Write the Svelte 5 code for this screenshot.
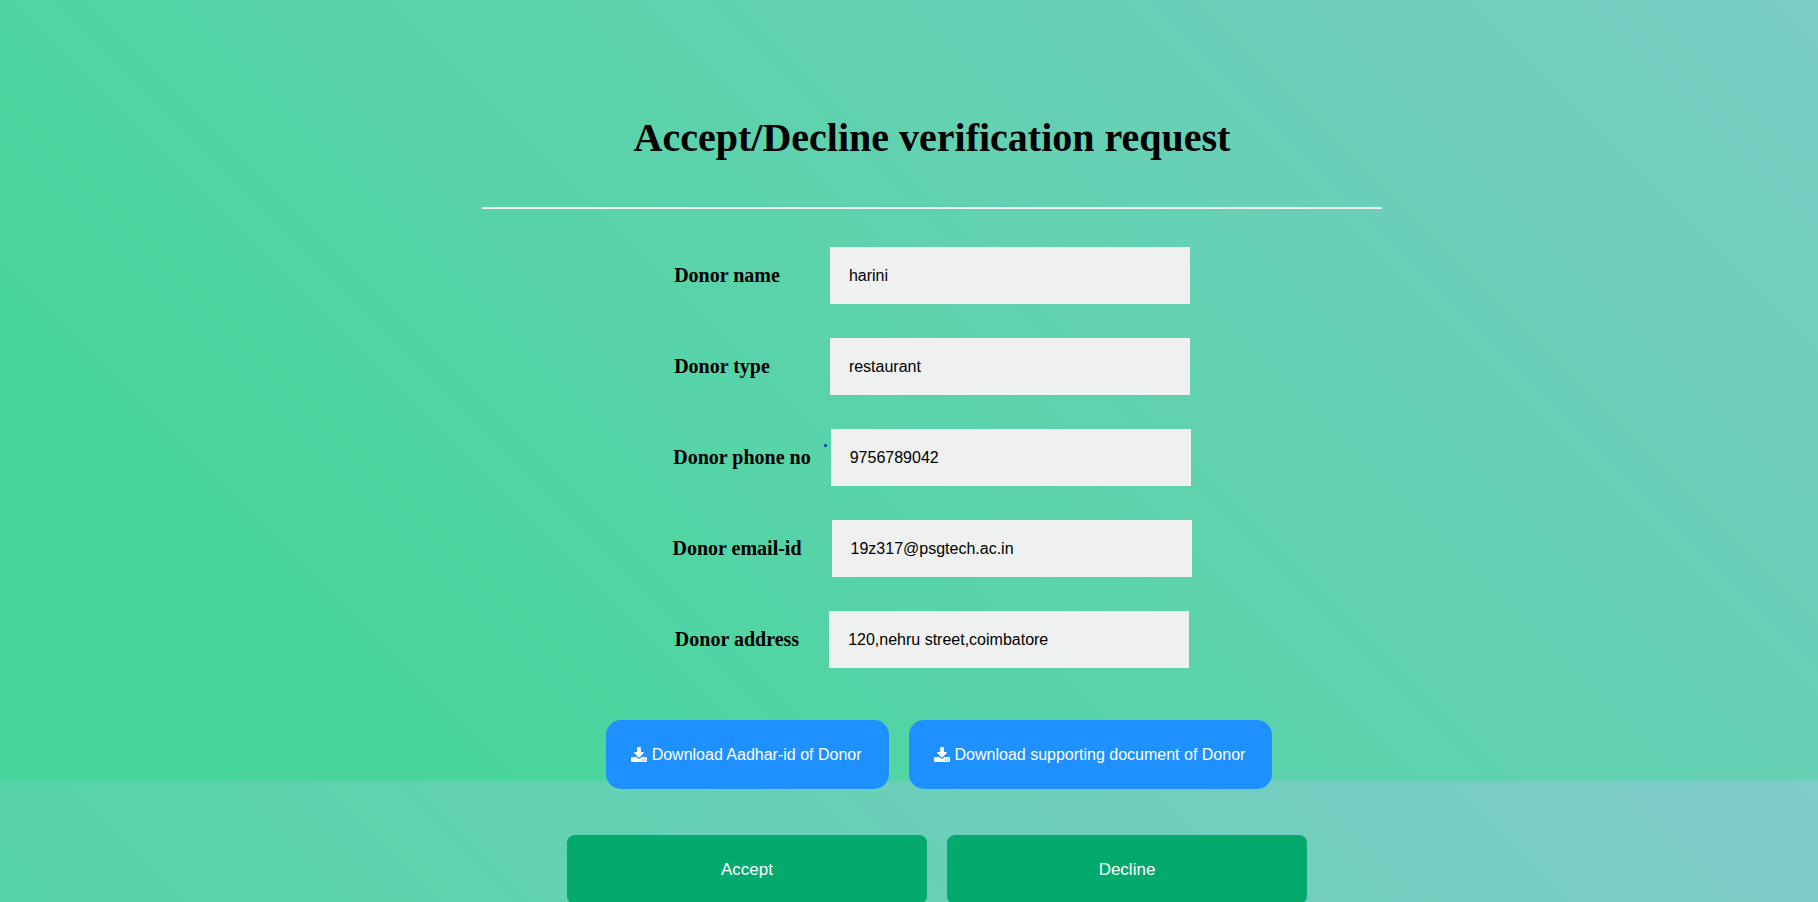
<script>
  const fields = [
    { id: 'name', label: 'Donor name', value: 'harini', type: 'text', gap: 50 },
    { id: 'type', label: 'Donor type', value: 'restaurant', type: 'text', gap: 60 },
    { id: 'phone', label: 'Donor phone no', value: '9756789042', type: 'text', gap: 20 },
    { id: 'email', label: 'Donor email-id', value: '19z317@psgtech.ac.in', type: 'text', gap: 30 },
    { id: 'address', label: 'Donor address', value: '120,nehru street,coimbatore', type: 'text', gap: 30 }
  ];
  const downloads = ['Download Aadhar-id of Donor', 'Download supporting document of Donor'];
</script>

<main class="page">
  <form class="request" onsubmit={(e) => e.preventDefault()}>
    <h1>Accept/Decline verification request</h1>
    <hr />
    {#each fields as field}
      <div class="field">
        <label for={field.id} style:margin-right="{field.gap}px">{field.label}</label>
        {#if field.id === 'phone'}<span class="dot"></span>{/if}
        <input id={field.id} type={field.type} value={field.value} />
      </div>
    {/each}
    <div class="row downloads">
      {#each downloads as text}
        <button type="button" class="download">
          <svg viewBox="0 0 1664 1536" aria-hidden="true">
            <path fill="currentColor" fill-rule="evenodd" d="M1280 1344q0-26-19-45t-45-19-45 19-19 45 19 45 45 19 45-19 19-45zM1536 1344q0-26-19-45t-45-19-45 19-19 45 19 45 45 19 45-19 19-45zM1664 1120v320q0 40-28 68t-68 28H96q-40 0-68-28t-28-68v-320q0-40 28-68t68-28h465l135 136q58 56 136 56t136-56l136-136h464q40 0 68 28t28 68zM1339 551q17 41-14 70l-448 448q-18 19-45 19t-45-19L339 621q-31-29-14-70 17-39 59-39h256V64q0-26 19-45t45-19h256q26 0 45 19t19 45v448h256q42 0 59 39z" />
          </svg>
          {text}
        </button>
      {/each}
    </div>
    <div class="row">
      <button type="submit" class="decide">Accept</button>
      <button type="button" class="decide">Decline</button>
    </div>
  </form>
</main>

<style>
  :global(html) {
    min-height: 100%;
    scrollbar-width: none;
    background: linear-gradient(45deg, #49d69d 0%, #49d69d 17%, #81cbca 100%) 0 -320px / 100% 1101px repeat-y;
  }

  .page {
    padding: 114px 0 0 46px;
    font-family: "Liberation Serif", "Times New Roman", serif;
    color: #000;
  }

  .request {
    display: flex;
    flex-direction: column;
    align-items: center;
    width: 900px;
    max-width: 100%;
    margin: 0 auto;
  }

  h1 {
    margin: 0;
    font-size: 40px;
    line-height: 48px;
  }

  hr {
    width: 100%;
    box-sizing: border-box;
    height: 2px;
    margin: 45px 0 38px;
    border: 0;
    background: #f1f1f1;
  }

  .field {
    position: relative;
    display: flex;
    align-items: center;
    margin-bottom: 34px;
  }

  label {
    padding-bottom: 2px;
    font-size: 20px;
    line-height: 22px;
    font-weight: bold;
  }

  input {
    box-sizing: border-box;
    width: 360px;
    height: 57px;
    padding: 0 19px;
    border: 0;
    background: #eff1f1;
    color: #000;
    font: 16px "Liberation Sans", Arial, sans-serif;
  }

  .dot {
    position: absolute;
    right: 364px;
    top: 15px;
    width: 3px;
    height: 3px;
    border-radius: 50%;
    background: #0b2fd0;
  }

  .row {
    display: flex;
    gap: 20px;
    margin-left: 10px;
  }

  .downloads {
    margin: 18px 0 46px 14px;
  }

  button {
    border: 0;
    color: #fff;
    font: 17px "Liberation Sans", Arial, sans-serif;
    cursor: pointer;
  }

  .download {
    display: flex;
    align-items: center;
    gap: 5px;
    height: 69px;
    padding: 0 27px 0 25px;
    border-radius: 15px;
    background: #1e90ff;
    font-size: 16px;
    white-space: nowrap;
  }

  .download svg {
    width: 16px;
    height: 15px;
  }

  .decide {
    width: 360px;
    height: 69px;
    border-radius: 8px;
    background: #04aa6d;
  }
</style>
